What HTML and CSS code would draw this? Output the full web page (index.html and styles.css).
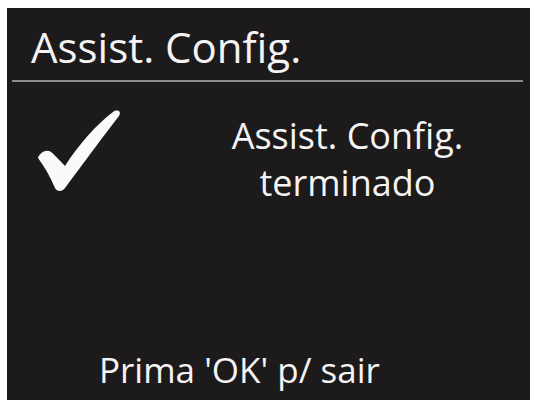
FILE: index.html
```html
<!DOCTYPE html>
<html lang="pt">
<head>
  <meta charset="UTF-8"/>
  <title>Assist. Config.</title>
  <link rel="stylesheet" href="styles.css">
</head>
<body>
  <div class="screen">
    <h1 class="title">Assist. Config.</h1>
    <div class="rule"></div>

    <div class="content">
      <svg class="check" viewBox="0 0 90 88" width="90" height="88">
        <path d="M3,50 C5,44 12,41 16,44 C20,47 26,54 30,58 C44,36 62,16 78,4 C82,1 87,3 84,8 C70,26 48,56 30,80 C27,84 22,84 20,80 C15,68 9,58 3,50 Z"/>
      </svg>
      <p class="message">Assist. Config.<br>terminado</p>
    </div>

    <p class="hint">Prima 'OK' p/ sair</p>
  </div>
</body>
</html>
```

FILE: styles.css
```css
body {
  margin: 0;
  background-color: #fff;
  font-family: 'Open Sans', sans-serif;
  font-weight: 500;
}

.screen {
  display: flex;
  flex-direction: column;
  margin: 8px 4px 3px 7px;
  height: 392px;
  background-color: #1d1a1b;
  color: #f4f4f4;
}

.title {
  margin: 0;
  padding: 6px 0 0 24px;
  font-size: 42px;
  font-weight: 500;
  line-height: 66px;
}

.rule {
  margin: 0 7px 0 5px;
  height: 2px;
  background-color: #8e8c8d;
}

.content {
  display: flex;
  align-items: flex-start;
  padding-top: 26px;
}

.check {
  margin-left: 28px;
  fill: #fafafa;
}

.message {
  flex: 1;
  margin: 0;
  padding: 4px 0 0 40px;
  text-align: center;
  font-size: 36px;
  line-height: 47px;
}

.hint {
  margin: auto 0 0;
  padding: 0 0 8px 92px;
  font-size: 35px;
  line-height: 44px;
}
```
